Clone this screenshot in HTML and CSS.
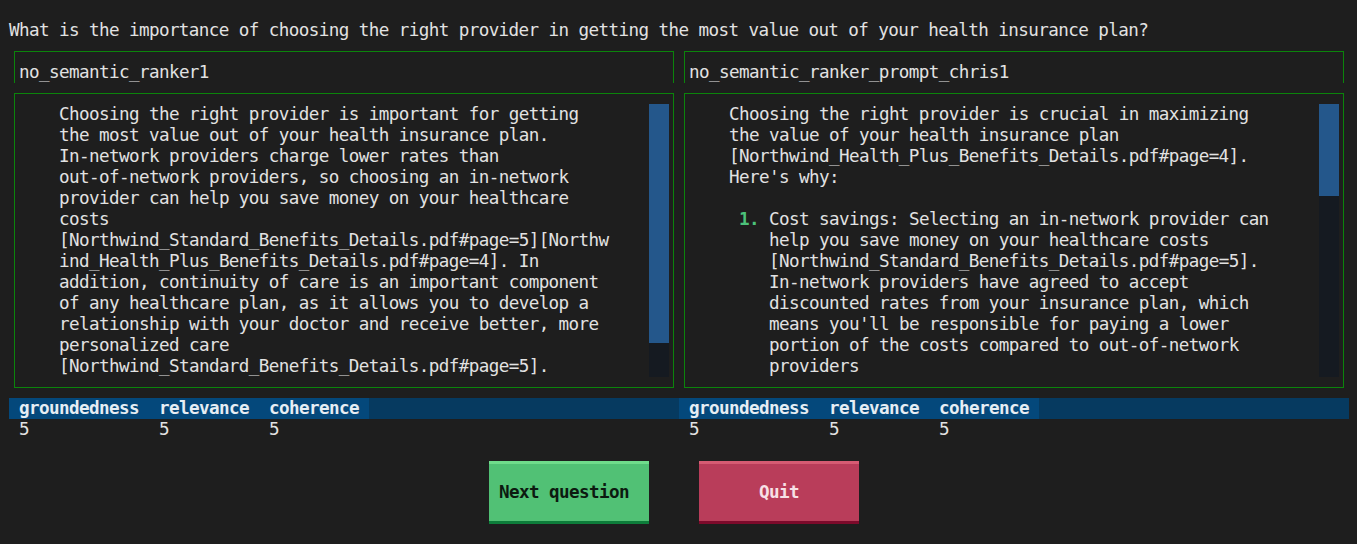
FILE: index.html
```html
<!DOCTYPE html>
<html>
<head>
<meta charset="utf-8">
<link rel="stylesheet" href="styles.css">
</head>
<body>
<div class="screen">
  <div class="question">What is the importance of choosing the right provider in getting the most value out of your health insurance plan?</div>
  <div class="panels">
    <section class="panel">
      <div class="title-box">no_semantic_ranker1</div>
      <div class="answer-box">
        <div class="answer">Choosing the right provider is important for getting
the most value out of your health insurance plan.
In-network providers charge lower rates than
out-of-network providers, so choosing an in-network
provider can help you save money on your healthcare
costs
[Northwind_Standard_Benefits_Details.pdf#page=5][Northw
ind_Health_Plus_Benefits_Details.pdf#page=4]. In
addition, continuity of care is an important component
of any healthcare plan, as it allows you to develop a
relationship with your doctor and receive better, more
personalized care
[Northwind_Standard_Benefits_Details.pdf#page=5].</div>
        <div class="scrollbar"><div class="thumb" style="height:239px"></div></div>
      </div>
      <div class="scores">
        <div class="score-head">
          <span class="cell c1">groundedness</span><span class="cell c2">relevance</span><span class="cell c3">coherence</span>
        </div>
        <div class="score-row">
          <span class="cell c1">5</span><span class="cell c2">5</span><span class="cell c3">5</span>
        </div>
      </div>
    </section>
    <section class="panel">
      <div class="title-box">no_semantic_ranker_prompt_chris1</div>
      <div class="answer-box">
        <div class="answer">Choosing the right provider is crucial in maximizing
the value of your health insurance plan
[Northwind_Health_Plus_Benefits_Details.pdf#page=4].
Here's why:

<div class="list-item"><span class="marker">1.</span><span class="item-text">Cost savings: Selecting an in-network provider can
help you save money on your healthcare costs
[Northwind_Standard_Benefits_Details.pdf#page=5].
In-network providers have agreed to accept
discounted rates from your insurance plan, which
means you'll be responsible for paying a lower
portion of the costs compared to out-of-network
providers</span></div></div>
        <div class="scrollbar"><div class="thumb" style="height:92px"></div></div>
      </div>
      <div class="scores">
        <div class="score-head">
          <span class="cell c1">groundedness</span><span class="cell c2">relevance</span><span class="cell c3">coherence</span>
        </div>
        <div class="score-row">
          <span class="cell c1">5</span><span class="cell c2">5</span><span class="cell c3">5</span>
        </div>
      </div>
    </section>
  </div>
  <div class="buttons">
    <button class="btn btn-next">Next question</button>
    <button class="btn btn-quit">Quit</button>
  </div>
</div>
</body>
</html>
```
FILE: styles.css
```css
html, body {
  margin: 0;
  padding: 0;
  background: #1e1e1e;
  overflow: hidden;
}

.screen {
  width: 1350px;
  height: 546px;
  margin: -1px 0 0 -1px;
  font-family: "DejaVu Sans Mono", "Liberation Mono", monospace;
  font-size: 17.6px;
  letter-spacing: -0.6px;
  line-height: 21px;
  color: #e2e2e2;
}

.question {
  margin-top: 21px;
  height: 21px;
  padding-left: 10px;
  white-space: pre;
}

.panels {
  display: grid;
  grid-template-columns: 670px 670px;
  padding-left: 10px;
}

.panel {
  display: flex;
  flex-direction: column;
}

.title-box {
  margin: 10px 5px 0 5px;
  padding: 10px 0 0 4px;
  box-sizing: border-box;
  height: 32px;
  border: 1px solid #0b840b;
  border-bottom: none;
  white-space: pre;
}

.answer-box {
  margin: 10px 5px 0 5px;
  border: 1px solid #0b840b;
  padding: 10px 4px 10px 44px;
  display: flex;
  height: 295px;
  box-sizing: border-box;
}

.answer {
  flex: 1;
  white-space: pre;
  overflow: hidden;
}

.list-item {
  display: flex;
  padding-left: 10px;
}

.marker {
  width: 30px;
  flex: none;
  color: #4cc27a;
  font-weight: bold;
}

.item-text {
  white-space: pre;
}

.scrollbar {
  width: 20px;
  flex: none;
  background: #151a21;
  display: flex;
  flex-direction: column;
}

.thumb {
  background: #24578b;
  width: 20px;
}

.scores {
  margin-top: 10px;
}

.score-head {
  display: flex;
  height: 21px;
  background: #063a60;
  font-weight: bold;
  color: #e6edf3;
}

.score-head .cell {
  background: #04487b;
}

.score-row {
  display: flex;
  height: 21px;
}

.cell {
  padding: 0 10px;
  white-space: pre;
  box-sizing: border-box;
}

.c1 { width: 140px; }
.c2 { width: 110px; }
.c3 { width: 110px; }

.buttons {
  margin-top: 21px;
  display: flex;
  justify-content: center;
  gap: 50px;
}

.btn {
  width: 160px;
  height: 63px;
  box-sizing: border-box;
  border: none;
  border-top: 3px solid;
  border-bottom: 3px solid;
  padding: 0;
  margin: 0;
  font-family: inherit;
  font-size: inherit;
  letter-spacing: inherit;
  line-height: 21px;
  font-weight: bold;
  text-align: center;
}

.btn-next {
  background: #51c175;
  border-top-color: #6fdc8b;
  border-bottom-color: #0d7d3a;
  color: #0c1a10;
  padding: 0 20px 0 10px;
  text-align: left;
}

.btn-quit {
  background: #b93d5a;
  border-top-color: #d65b73;
  border-bottom-color: #7d0a2b;
  color: #f7e0e6;
}
```
